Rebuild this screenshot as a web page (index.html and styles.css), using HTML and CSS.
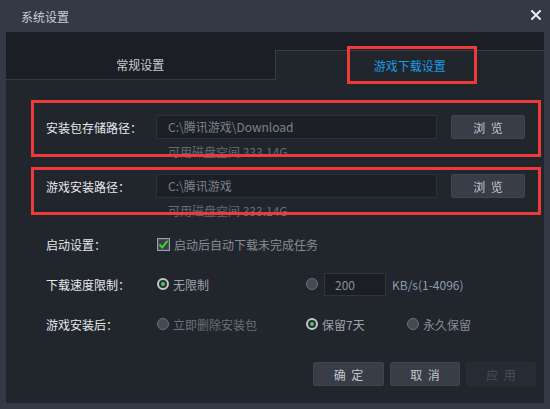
FILE: index.html
```html
<!DOCTYPE html>
<html lang="zh-CN">
<head>
    <meta charset="UTF-8">
    <meta name="viewport" content="width=device-width, initial-scale=1.0">
    <title>系统设置</title>
    <link rel="stylesheet" href="styles.css">
</head>
<body>
    <div class="window">
        <div class="titlebar">
            <span class="title">系统设置</span>
            <svg class="close" width="10" height="10" viewBox="0 0 10 10">
                <path d="M1 1 L9 9 M9 1 L1 9" stroke="#e8eaee" stroke-width="2" stroke-linecap="square"/>
            </svg>
        </div>
        <div class="panel">
            <div class="tabs">
                <div class="tab">常规设置</div>
                <div class="tab active">
                    游戏下载设置
                    <span class="tab-mark"></span>
                </div>
            </div>

            <div class="path-row first marked">
                <div class="path-line">
                    <span class="label">安装包存储路径：</span>
                    <div class="path-input">C:\腾讯游戏\Download</div>
                    <button class="btn">浏&nbsp;&nbsp;览</button>
                </div>
                <div class="space">可用磁盘空间 333.14G</div>
            </div>

            <div class="path-row second marked">
                <div class="path-line">
                    <span class="label">游戏安装路径：</span>
                    <div class="path-input">C:\腾讯游戏</div>
                    <button class="btn">浏&nbsp;&nbsp;览</button>
                </div>
                <div class="space">可用磁盘空间 333.14G</div>
            </div>

            <div class="options">
                <div class="opt-row">
                    <span class="opt-label">启动设置：</span>
                    <span class="choice">
                        <svg class="check" width="13" height="13" viewBox="0 0 13 13">
                            <rect x="0.5" y="0.5" width="12" height="12" fill="#4b5059" stroke="#9ca1a8"/>
                            <rect x="2" y="2" width="9" height="9" fill="#3a3f47"/>
                            <path d="M2.5 6.5 L5.2 9.5 L10.5 2.8" stroke="#3fd13f" stroke-width="2" fill="none"/>
                        </svg>
                        <span class="dim">启动后自动下载未完成任务</span>
                    </span>
                </div>
                <div class="opt-row">
                    <span class="opt-label">下载速度限制：</span>
                    <span class="choice cell">
                        <span class="radio on"></span>
                        <span class="light">无限制</span>
                    </span>
                    <span class="choice">
                        <span class="radio"></span>
                        <span class="speed-input">200</span>
                        <span class="unit">KB/s(1-4096)</span>
                    </span>
                </div>
                <div class="opt-row">
                    <span class="opt-label">游戏安装后：</span>
                    <span class="choice cell">
                        <span class="radio"></span>
                        <span class="dimmer">立即删除安装包</span>
                    </span>
                    <span class="choice cell short">
                        <span class="radio on"></span>
                        <span class="light">保留7天</span>
                    </span>
                    <span class="choice">
                        <span class="radio"></span>
                        <span class="dim">永久保留</span>
                    </span>
                </div>
            </div>

            <div class="footer">
                <button class="btn wide">确&nbsp;&nbsp;定</button>
                <button class="btn">取&nbsp;&nbsp;消</button>
                <button class="btn disabled">应&nbsp;&nbsp;用</button>
            </div>
        </div>
    </div>
</body>
</html>
```

FILE: styles.css
```css
* {
    box-sizing: border-box;
}
body {
    margin: 0;
    width: 550px;
    height: 409px;
    font-family: "Noto Sans CJK SC", "Noto Sans", sans-serif;
    font-size: 12px;
    background: #333944;
}
.window {
    width: 550px;
    height: 409px;
    background: #343a45;
    padding: 0 6px 6px 6px;
    display: flex;
    flex-direction: column;
}
.titlebar {
    height: 32px;
    display: flex;
    align-items: center;
    justify-content: space-between;
    padding: 0 3px 0 15px;
}
.title {
    color: #c9cdd3;
    font-size: 12px;
}
.close {
    margin-top: -2px;
}
.panel {
    flex: 1;
    background: #21252c;
    display: flex;
    flex-direction: column;
}
.tabs {
    display: flex;
    background: #1b1e24;
    height: 48px;
}
.tab {
    flex: 1;
    text-align: center;
    color: #c9cdd3;
    line-height: 29px;
    padding-top: 18px;
    border-bottom: 1px solid #363b44;
}
.tab.active {
    position: relative;
    padding-top: 0;
    margin-top: 18px;
    height: 30px;
    border-bottom: none;
    border-top: 1px solid #363b44;
    border-left: 1px solid #363b44;
    background: #21252c;
    color: #1e9ae4;
}
.tab-mark {
    position: absolute;
    left: 71px;
    top: -5px;
    width: 130px;
    height: 38px;
    border: 3px solid #f03a3a;
}
.path-row {
    position: relative;
    margin: 0 3px 0 25px;
    padding-left: 15px;
}
.path-row.first {
    margin-top: 20px;
    height: 57px;
    padding-top: 15px;
}
.path-row.second {
    margin-top: 10px;
    height: 48px;
    padding-top: 7px;
}
.marked::after {
    content: "";
    position: absolute;
    inset: 0;
    border: 3px solid #f03a3a;
}
.path-line {
    display: flex;
    align-items: center;
    height: 24px;
}
.label {
    width: 110px;
    color: #e6e8eb;
}
.path-input {
    width: 281px;
    height: 24px;
    line-height: 22px;
    padding-left: 11px;
    border: 1px solid #2d3139;
    background: #1c1f25;
    color: #7d828a;
}
.btn {
    font-family: inherit;
    font-size: 12px;
    width: 74px;
    height: 24px;
    margin-left: 14px;
    border: 1px solid #3f444d;
    border-radius: 2px;
    background: #383d47;
    color: #c4c8cd;
    padding: 0;
}
.space {
    margin-top: 5px;
    padding-left: 122px;
    line-height: 16px;
    color: #666b73;
}
.options {
    margin-top: 9px;
}
.opt-row {
    display: flex;
    align-items: center;
    height: 40px;
    padding-left: 40px;
}
.opt-label {
    width: 111px;
    color: #e6e8eb;
}
.choice {
    display: flex;
    align-items: center;
}
.cell {
    width: 149px;
}
.cell.short {
    width: 101px;
}
.check {
    margin-right: 4px;
}
.radio {
    width: 12px;
    height: 12px;
    border-radius: 50%;
    border: 1px solid #6b7078;
    background: #454a52;
    margin-right: 4px;
    position: relative;
}
.radio.on {
    border: 2px solid #c3c7cc;
    background: #2a2e35;
}
.radio.on::after {
    content: "";
    position: absolute;
    left: 2px;
    top: 2px;
    width: 4px;
    height: 4px;
    border-radius: 50%;
    background: #3fd13f;
}
.dim {
    color: #878c94;
}
.dimmer {
    color: #6c7179;
}
.light {
    color: #9ea3aa;
}
.speed-input {
    width: 62px;
    height: 23px;
    line-height: 21px;
    margin-left: 2px;
    padding-left: 10px;
    border: 1px solid #30343c;
    background: #1b1e24;
    color: #8a8f96;
}
.unit {
    margin-left: 6px;
    color: #8b9bb1;
}
.footer {
    margin-top: auto;
    display: flex;
    justify-content: flex-end;
    gap: 6px;
    padding: 0 8px 17px 0;
}
.footer .btn {
    margin-left: 0;
    width: 70px;
}
.footer .btn.wide {
    width: 71px;
}
.btn.disabled {
    background: #272b33;
    border-color: #292d35;
    color: #4b5058;
}
```
